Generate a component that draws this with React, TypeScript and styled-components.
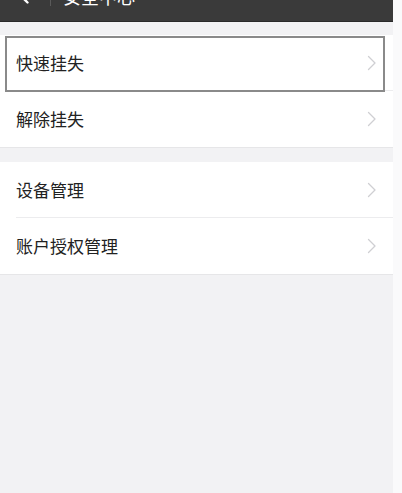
import React from "react";
import styled, { createGlobalStyle } from "styled-components";

const Global = createGlobalStyle`
  html, body { margin: 0; padding: 0; background: #fafafb; }
  body { font-family: "Noto Sans CJK SC", "Noto Sans", sans-serif; overflow: hidden; }
  * { box-sizing: border-box; }
`;

const Page = styled.div`
  width: 393px;
  min-height: 493px;
  background: #f2f2f4;
  display: flex;
  flex-direction: column;
  overflow: hidden;
`;

const Header = styled.header`
  height: 45px;
  margin-top: -23px;
  background: #3a3a3a;
  border-bottom: 1px solid #2a2a2a;
  display: flex;
  align-items: center;
  padding: 0 0 7px 19px;
  flex-shrink: 0;
`;

const BackButton = styled.div`
  width: 10px;
  height: 16px;
  display: flex;
  align-items: center;
`;

const Divider = styled.div`
  width: 1px;
  height: 20px;
  background: #5a5a5a;
  margin-left: 21px;
`;

const Title = styled.h1`
  margin: 0 0 0 12px;
  font-size: 18px;
  font-weight: 400;
  color: #ffffff;
  line-height: 1;
`;

const Group = styled.div<{ $gapTop: number }>`
  margin-top: ${(p) => p.$gapTop}px;
  background: #ffffff;
  border-bottom: 1px solid #e6e6e8;
  display: flex;
  flex-direction: column;
`;

const Row = styled.div<{ $focused?: boolean; $last?: boolean }>`
  position: relative;
  height: 56px;
  display: flex;
  align-items: center;
  justify-content: space-between;
  padding: 0 16px;
  font-size: 17px;
  color: #222222;
  &::before {
    content: "";
    display: ${(p) => (p.$last ? "none" : "block")};
    position: absolute;
    left: 16px;
    right: 0;
    bottom: 0;
    height: 1px;
    background: #ececee;
  }
  &::after {
    content: "";
    display: ${(p) => (p.$focused ? "block" : "none")};
    position: absolute;
    left: 5px;
    right: 8px;
    top: 1px;
    bottom: -1px;
    border: 2px solid #8a8a8a;
  }
`;

const Label = styled.span`
  line-height: 1;
  margin-top: -1px;
`;

const Chevron = () => (
  <svg width="10" height="16" viewBox="0 0 10 16" fill="none">
    <path d="M1.5 1.5 L8 8 L1.5 14.5" stroke="#cfcfd3" strokeWidth="1.3" strokeLinecap="round" strokeLinejoin="round" />
  </svg>
);

const BackIcon = () => (
  <svg width="10" height="16" viewBox="0 0 10 16" fill="none">
    <path d="M8.5 1.5 L2 8 L8.5 14.5" stroke="#ffffff" strokeWidth="2.4" strokeLinecap="round" strokeLinejoin="round" />
  </svg>
);

const groups = [
  { gap: 13, items: ["快速挂失", "解除挂失"] },
  { gap: 14, items: ["设备管理", "账户授权管理"] },
];

export default function App() {
  return (
    <>
      <Global />
      <Page>
        <Header>
          <BackButton>
            <BackIcon />
          </BackButton>
          <Divider />
          <Title>安全中心</Title>
        </Header>
        {groups.map((g, gi) => (
          <Group key={gi} $gapTop={g.gap}>
            {g.items.map((item, i) => (
              <Row key={item} $focused={gi === 0 && i === 0} $last={i === g.items.length - 1}>
                <Label>{item}</Label>
                <Chevron />
              </Row>
            ))}
          </Group>
        ))}
      </Page>
    </>
  );
}
